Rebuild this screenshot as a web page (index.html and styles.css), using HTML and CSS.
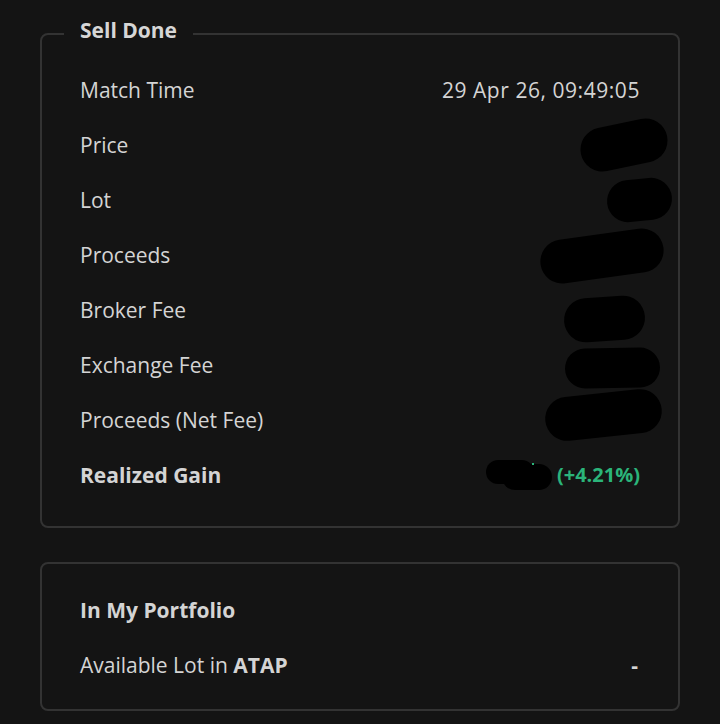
FILE: index.html
```html
<!DOCTYPE html>
<html>
<head>
<meta charset="utf-8">
<link rel="stylesheet" href="styles.css">
</head>
<body>
<main class="page">
  <fieldset class="card card-sell">
    <legend class="card-title">Sell Done</legend>
    <div class="rows">
      <div class="row"><span class="label">Match Time</span><span class="value date">29 Apr 26, 09:49:05</span></div>
      <div class="row"><span class="label">Price</span><span class="value"><span class="redact" style="width:88px;height:44px;transform:translate(28px,0) rotate(-12deg)"></span></span></div>
      <div class="row"><span class="label">Lot</span><span class="value"><span class="redact" style="width:65px;height:42px;transform:translate(32px,0) rotate(-6deg)"></span></span></div>
      <div class="row"><span class="label">Proceeds</span><span class="value"><span class="redact" style="width:124px;height:44px;transform:translate(24px,1px) rotate(-8deg)"></span></span></div>
      <div class="row"><span class="label">Broker Fee</span><span class="value"><span class="redact" style="width:81px;height:44px;transform:translate(5px,9px) rotate(-4deg)"></span></span></div>
      <div class="row"><span class="label">Exchange Fee</span><span class="value"><span class="redact" style="width:95px;height:40px;transform:translate(20px,3px) rotate(-1deg)"></span></span></div>
      <div class="row"><span class="label">Proceeds (Net Fee)</span><span class="value"><span class="redact" style="width:117px;height:44px;transform:translate(22px,-5px) rotate(-6deg)"></span></span></div>
      <div class="row row-strong"><span class="label">Realized Gain</span><span class="value gain"><span class="redact-group"><span class="redact" style="width:48px;height:24px"></span><span class="redact redact-b" style="width:50px;height:26px"></span><span class="speck"></span></span><span class="gain-text">(+4.21%)</span></span></div>
    </div>
  </fieldset>

  <section class="card card-portfolio">
    <div class="rows">
      <div class="row row-strong"><span class="label">In My Portfolio</span></div>
      <div class="row"><span class="label">Available Lot in <b>ATAP</b></span><span class="value dash">-</span></div>
    </div>
  </section>
</main>
</body>
</html>
```

FILE: styles.css
```css
html, body {
  margin: 0;
  padding: 0;
  background: #141414;
}

body {
  font-family: "Open Sans", Lato, "Liberation Sans", sans-serif;
  color: #d4d4d4;
  width: 720px;
  height: 724px;
  overflow: hidden;
}

.page {
  padding: 18px 40px 0 40px;
  display: flex;
  flex-direction: column;
  gap: 34px;
}

.card {
  margin: 0;
  border: 2px solid #333333;
  border-radius: 8px;
  min-width: 0;
  box-sizing: border-box;
}

.card-sell {
  padding: 12px 0 24px 0;
}

.card-title {
  margin-left: 22px;
  padding: 0 16px 8px 16px;
  font-size: 21px;
  font-weight: 700;
  line-height: 24px;
  color: #d6d6d6;
}

.card-portfolio {
  padding: 18px 0 17px 0;
}

.rows {
  padding: 0 38px;
  display: flex;
  flex-direction: column;
}

.row {
  height: 55px;
  display: flex;
  align-items: center;
  justify-content: space-between;
  font-size: 21px;
}

.label {
  color: #d4d4d4;
}

.label b {
  font-weight: 700;
}

.row-strong .label {
  font-weight: 700;
}

.value {
  display: flex;
  align-items: center;
  color: #d4d4d4;
}

.date {
  letter-spacing: 0.55px;
}

.redact {
  display: inline-block;
  background: #000;
  border-radius: 999px;
}

.redact-group {
  display: inline-flex;
  position: relative;
  width: 68px;
  height: 30px;
  margin-right: 3px;
}

.redact-group .redact {
  position: absolute;
  left: 0;
  top: 0;
}

.redact-group .redact-b {
  left: 16px;
  top: 4px;
}

.speck {
  position: absolute;
  left: 46px;
  top: 3px;
  width: 2px;
  height: 2px;
  background: #2bb47a;
}

.gain-text {
  color: #2bb47a;
  font-weight: 700;
  font-size: 20px;
}

.dash {
  font-weight: 700;
  padding-right: 2px;
}
```
